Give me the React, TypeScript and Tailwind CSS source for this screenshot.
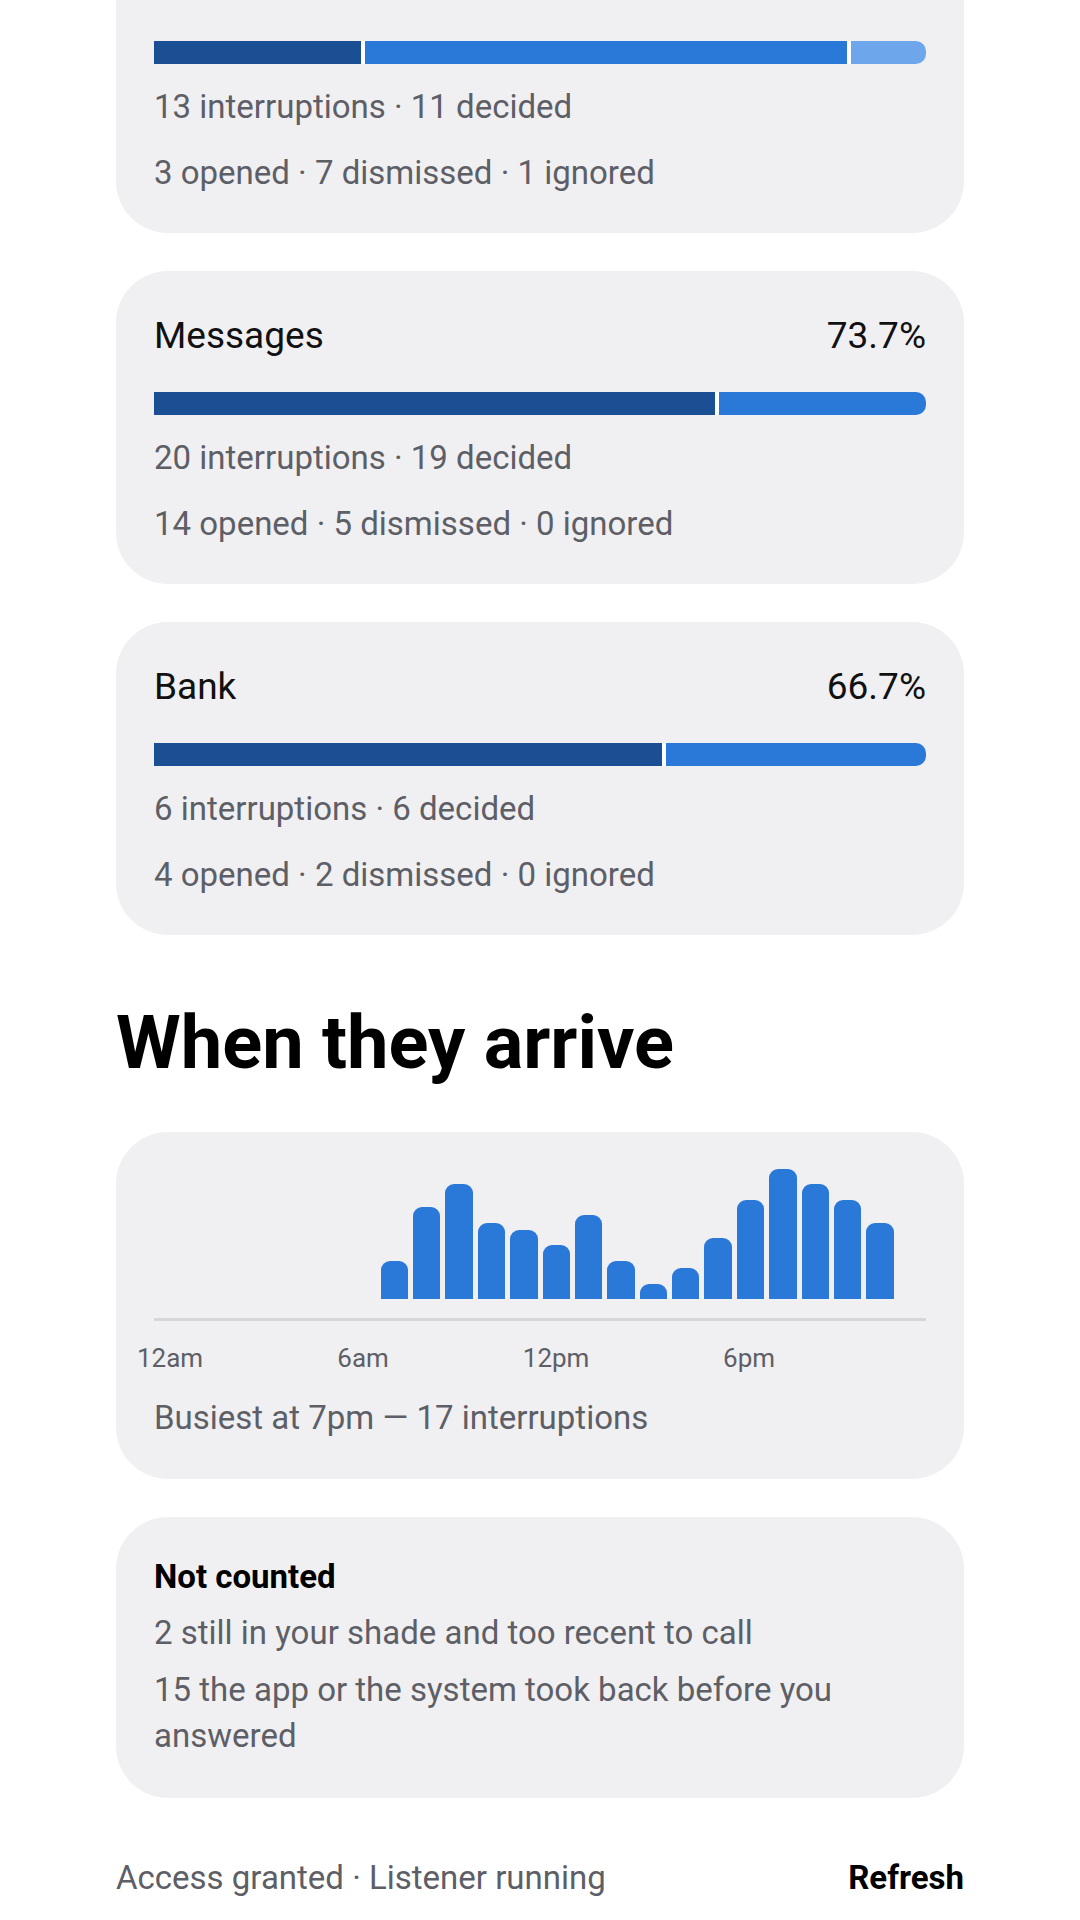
import { type CSSProperties } from "react";

type AppStat = {
  name: string;
  opened: number;
  dismissed: number;
  ignored: number;
  total: number;
};

const apps: AppStat[] = [
  { name: "Email", opened: 3, dismissed: 7, ignored: 1, total: 13 },
  { name: "Messages", opened: 14, dismissed: 5, ignored: 0, total: 20 },
  { name: "Bank", opened: 4, dismissed: 2, ignored: 0, total: 6 }
];

// interruptions per hour, 12am..11pm
const hourly = [0, 0, 0, 0, 0, 0, 0, 5, 12, 15, 10, 9, 7, 11, 5, 2, 4, 8, 13, 17, 15, 13, 10, 0];

const axisLabels = [
  { label: "12am", col: "col-start-1" },
  { label: "6am", col: "col-start-7" },
  { label: "12pm", col: "col-start-13" },
  { label: "6pm", col: "col-start-19" }
];

function AppCard({ app }: { app: AppStat }) {
  const decided = app.opened + app.dismissed + app.ignored;
  const pct = ((app.opened / decided) * 100).toFixed(1);
  const segments = [
    { count: app.opened, color: "bg-[#1b4f93]" },
    { count: app.dismissed, color: "bg-[#2a78d7]" },
    { count: app.ignored, color: "bg-[#6ea6eb]" }
  ].filter((s) => s.count > 0);

  return (
    <div className="rounded-[52px] bg-[#f0f0f3] px-[38px] pt-[39px] pb-[37px]">
      <div className="flex h-[52px] items-center justify-between text-[37px] text-[#111111]">
        <span>{app.name}</span>
        <span>{pct}%</span>
      </div>
      <div className="mt-[30px] flex h-[23px] gap-[4px] overflow-hidden rounded-r-[10px] bg-white">
        {segments.map((s, i) => (
          <div
            key={i}
            className={`${s.color} h-full ${i === segments.length - 1 ? "basis-[6px]" : "basis-0"}`}
            style={{ flexGrow: s.count } as CSSProperties}
          />
        ))}
      </div>
      <p className="mt-[20px] text-[33px] leading-[46px] text-[#5e5f66]">
        {app.total} interruptions · {decided} decided
      </p>
      <p className="mt-[20px] text-[33px] leading-[46px] text-[#5e5f66]">
        {app.opened} opened · {app.dismissed} dismissed · {app.ignored} ignored
      </p>
    </div>
  );
}

export default function App() {
  const max = Math.max(...hourly);
  const busiest = hourly.indexOf(max);

  return (
    <div className="h-[1920px] overflow-hidden bg-white font-['Roboto',sans-serif]">
      <div className="-mt-[80px] flex flex-col px-[116px]">
        <div className="flex flex-col gap-[38px]">
          {apps.map((app) => (
            <AppCard key={app.name} app={app} />
          ))}
        </div>

        <h2 className="mt-[64px] text-[74px] leading-[88px] font-bold text-black">When they arrive</h2>

        <div className="mt-[45px] rounded-[52px] bg-[#f0f0f3] px-[38px] pt-[37px] pb-[38px]">
          <div className="grid h-[130px] grid-cols-[repeat(24,minmax(0,1fr))] items-end gap-x-[5px]">
            {hourly.map((count, h) => (
              <div key={h}>
                {count > 0 && (
                  <div
                    className="rounded-t-[9px] bg-[#2a78d7]"
                    style={{ height: `${(count / max) * 130}px` }}
                  />
                )}
              </div>
            ))}
          </div>
          <div className="mt-[19px] h-[3px] bg-[#d6d6da]" />
          <div className="mt-[21px] grid h-[32px] grid-cols-[repeat(24,minmax(0,1fr))]">
            {axisLabels.map((a) => (
              <div key={a.label} className={`${a.col} row-start-1 flex justify-center`}>
                <span className="whitespace-nowrap text-[26px] leading-[32px] text-[#5e5f66]">{a.label}</span>
              </div>
            ))}
          </div>
          <p className="mt-[21px] text-[33px] leading-[46px] text-[#5e5f66]">
            Busiest at {busiest - 12}pm — {max} interruptions
          </p>
        </div>

        <div className="mt-[38px] rounded-[52px] bg-[#f0f0f3] px-[38px] pt-[37px] pb-[39px]">
          <p className="text-[33px] leading-[46px] font-bold text-black">Not counted</p>
          <p className="mt-[10px] text-[33px] leading-[46px] text-[#5e5f66]">
            2 still in your shade and too recent to call
          </p>
          <p className="mt-[11px] text-[33px] leading-[46px] text-[#5e5f66]">
            15 the app or the system took back before you answered
          </p>
        </div>

        <div className="mt-[57px] flex items-center justify-between text-[33px] leading-[46px]">
          <span className="text-[#5e5f66]">Access granted · Listener running</span>
          <button type="button" className="font-bold text-black">
            Refresh
          </button>
        </div>
      </div>
    </div>
  );
}
